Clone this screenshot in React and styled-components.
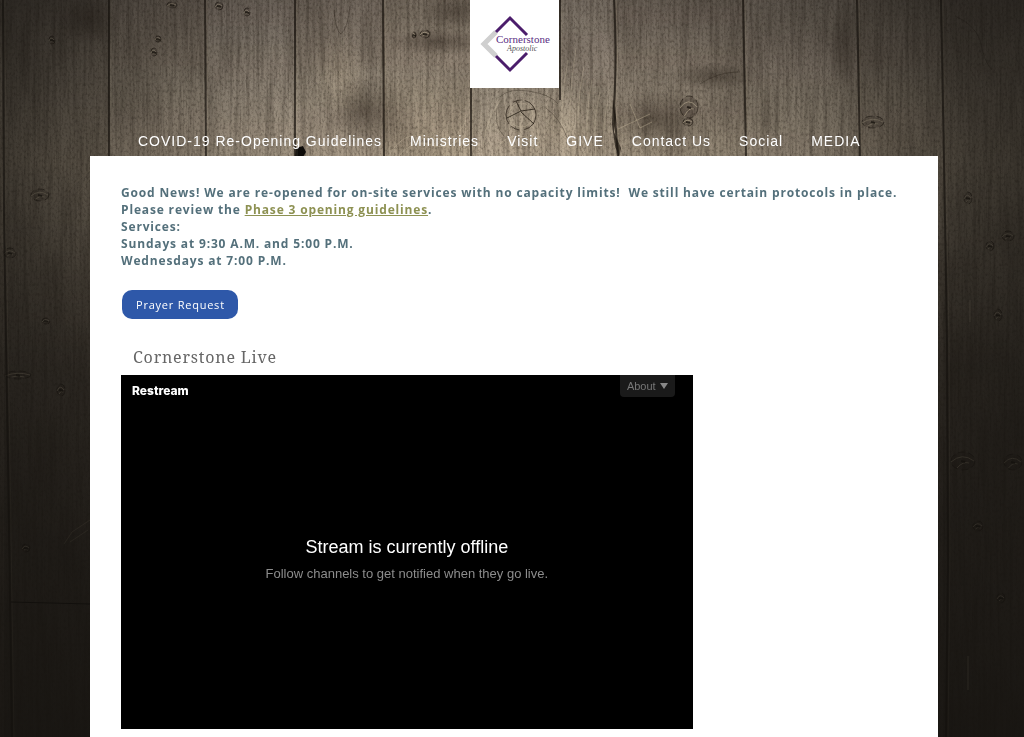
import React from "react";
import styled, { createGlobalStyle } from "styled-components";

const GlobalStyle = createGlobalStyle`
  *, *::before, *::after { box-sizing: border-box; }
  html { background: #24211c; }
  body {
    margin: 0;
    font-family: "Open Sans", "Noto Sans", sans-serif;
    font-size: 12px;
    overflow-x: hidden;
  }
  h1, h2, p, ul { margin: 0; padding: 0; }
`;

const Backdrop = styled.svg`
  position: fixed;
  inset: 0;
  width: 100%;
  height: 100%;
  z-index: -1;
`;

const Page = styled.div`
  height: 100vh;
  overflow: hidden;
  padding: 0 86px 0 90px;
  display: flex;
  flex-direction: column;
`;

const Header = styled.header`
  display: flex;
  flex-direction: column;
  align-items: center;
`;

const LogoLink = styled.a`
  display: block;
  width: 89px;
  height: 88px;
  background: #fff;
`;

const LogoArt = styled.svg`
  display: block;
  width: 100%;
  height: 100%;
`;

const Nav = styled.nav`
  width: 100%;
  padding: 44px 48px 6px;
`;

const NavList = styled.ul`
  display: flex;
  flex-wrap: wrap;
  gap: 0 28px;
  list-style: none;
`;

const NavLink = styled.a`
  display: block;
  color: #fff;
  font-family: "Liberation Sans", Arial, sans-serif;
  font-size: 14px;
  line-height: 18px;
  letter-spacing: 1px;
  text-decoration: none;
  white-space: nowrap;
`;

const Content = styled.main`
  flex: 1 0 auto;
  background: #fff;
  padding: 28px 31px 40px;
`;

const Notice = styled.p`
  color: #54707b;
  font-size: 12px;
  font-weight: 700;
  line-height: 17px;
  letter-spacing: 0.07em;
`;

const NoticeLink = styled.a`
  color: #8d9152;
  text-decoration: underline;
`;

const PrayerButton = styled.button`
  display: block;
  margin: 21px 0 0 1px;
  height: 29px;
  padding: 0 13px 0 14px;
  border: 0;
  border-radius: 10px;
  background: #2e58a9;
  color: #fff;
  font-family: "Open Sans", sans-serif;
  font-size: 11px;
  letter-spacing: 0.07em;
  cursor: pointer;
`;

const SectionTitle = styled.h2`
  margin-top: 26px;
  padding-left: 12px;
  color: #666;
  font-family: "Noto Serif", "Liberation Serif", serif;
  font-size: 16px;
  font-weight: 400;
  line-height: 24px;
  letter-spacing: 0.05em;
`;

const Columns = styled.div`
  margin-top: 6px;
  display: grid;
  grid-template-columns: 8fr 3fr;
`;

const Player = styled.section`
  aspect-ratio: 21 / 13;
  background: #000;
  display: flex;
  flex-direction: column;
`;

const PlayerBar = styled.div`
  display: flex;
  justify-content: space-between;
  align-items: flex-start;
  height: 32px;
  padding: 0 18px 0 11px;
`;

const Brand = styled.span`
  padding-top: 8px;
  color: #fff;
  font-family: Inter, sans-serif;
  font-size: 12px;
  line-height: 16px;
  font-weight: 800;
`;

const AboutButton = styled.button`
  display: flex;
  align-items: center;
  gap: 4px;
  height: 22px;
  padding: 0 7px 1px;
  border: 0;
  border-radius: 0 0 4px 4px;
  background: #1a1a1a;
  color: #777;
  font-family: "Liberation Sans", Arial, sans-serif;
  font-size: 11px;
  cursor: pointer;
`;

const PlayerMessage = styled.div`
  flex: 1;
  display: flex;
  flex-direction: column;
  align-items: center;
  justify-content: center;
  gap: 6px;
  padding-bottom: 18px;
  font-family: "Liberation Sans", Arial, sans-serif;
  text-align: center;
`;

const MessageTitle = styled.p`
  color: #fff;
  font-size: 18px;
  line-height: 24px;
`;

const MessageText = styled.p`
  color: #8c8c8c;
  font-size: 13px;
  line-height: 18px;
`;

const navItems = [
  "COVID-19 Re-Opening Guidelines",
  "Ministries",
  "Visit",
  "GIVE",
  "Contact Us",
  "Social",
  "MEDIA",
];

const planks = [
  { x: 4, w: 105, shade: "#000", o: 0.14 },
  { x: 109, w: 97, shade: "#fff", o: 0.02 },
  { x: 206, w: 89, shade: "#fff", o: 0.05 },
  { x: 295, w: 88, shade: "#fff", o: 0.02 },
  { x: 383, w: 88, shade: "#d8b880", o: 0.04 },
  { x: 471, w: 144, shade: "#fff", o: 0.03 },
  { x: 615, w: 129, shade: "#000", o: 0.06 },
  { x: 744, w: 114, shade: "#fff", o: 0.03 },
  { x: 858, w: 85, shade: "#000", o: 0.04 },
  { x: 943, w: 81, shade: "#000", o: 0.12 },
];

const seams = [
  "M3 0L4 220L8 460L12 737",
  "M109 0V157",
  "M205 0L206 157",
  "M295 0V157",
  "M383 0L384 157",
  "M471 88V157",
  "M560 0V100",
  "M614 0Q617 60 614 105L618 157",
  "M743 0L746 157",
  "M857 0L860 157",
  "M941 0L944 160L947 340L948 560L946 737",
];

const knots = [
  [689, 107, 9, 11],
  [688, 122, 5, 4],
  [873, 122, 11, 6],
  [425, 34, 5, 4],
  [414, 35, 2, 3],
  [172, 5, 5, 3],
  [219, 6, 4, 4],
  [247, 12, 3, 4],
  [52, 40, 3, 4],
  [158, 39, 3, 3],
  [154, 52, 3, 4],
  [40, 195, 9, 6],
  [46, 321, 4, 3],
  [10, 253, 6, 5],
  [18, 375, 13, 4],
  [61, 390, 4, 6],
  [963, 461, 12, 9],
  [1013, 462, 9, 8],
  [978, 526, 5, 5],
  [968, 198, 4, 6],
  [990, 246, 4, 5],
  [998, 315, 4, 6],
  [1008, 236, 6, 5],
  [1001, 598, 4, 5],
  [26, 548, 4, 4],
];

function Wood() {
  return (
    <Backdrop viewBox="0 0 1024 737" preserveAspectRatio="xMidYMin slice" aria-hidden="true">
      <defs>
        <linearGradient id="base" x1="0" x2="0" y1="0" y2="1">
          <stop offset="0" stopColor="#80756a" />
          <stop offset="0.12" stopColor="#a19483" />
          <stop offset="0.22" stopColor="#b8a993" />
          <stop offset="0.5" stopColor="#6c6256" />
          <stop offset="0.8" stopColor="#544b42" />
          <stop offset="1" stopColor="#3c362f" />
        </linearGradient>
        <radialGradient
          id="vignette"
          gradientUnits="userSpaceOnUse"
          cx="0"
          cy="0"
          r="1"
          gradientTransform="translate(490 160) scale(600 560)"
        >
          <stop offset="0" stopColor="#12100d" stopOpacity="0" />
          <stop offset="0.35" stopColor="#12100d" stopOpacity="0.12" />
          <stop offset="0.6" stopColor="#12100d" stopOpacity="0.38" />
          <stop offset="0.8" stopColor="#12100d" stopOpacity="0.66" />
          <stop offset="1" stopColor="#12100d" stopOpacity="0.78" />
        </radialGradient>
        <radialGradient id="stain">
          <stop offset="0" stopColor="#2a2119" stopOpacity="0.42" />
          <stop offset="1" stopColor="#2a2119" stopOpacity="0" />
        </radialGradient>
        <radialGradient id="glow">
          <stop offset="0" stopColor="#cbbaa0" stopOpacity="0.5" />
          <stop offset="1" stopColor="#cbbaa0" stopOpacity="0" />
        </radialGradient>
        <filter id="grain" x="0" y="0" width="100%" height="100%" colorInterpolationFilters="sRGB">
          <feTurbulence type="fractalNoise" baseFrequency="0.3 0.012" numOctaves="4" seed="7" />
          <feColorMatrix values="0 0 0 0 0.14  0 0 0 0 0.11  0 0 0 0 0.08  1.6 0 0 0 -0.6" />
        </filter>
        <filter id="speck" x="0" y="0" width="100%" height="100%" colorInterpolationFilters="sRGB">
          <feTurbulence type="fractalNoise" baseFrequency="0.5 0.3" numOctaves="3" seed="3" />
          <feColorMatrix values="0 0 0 0 0.14  0 0 0 0 0.11  0 0 0 0 0.08  1.6 0 0 0 -0.7" />
        </filter>
        <filter id="mottle" x="0" y="0" width="100%" height="100%" colorInterpolationFilters="sRGB">
          <feTurbulence type="fractalNoise" baseFrequency="0.018 0.012" numOctaves="4" seed="12" />
          <feColorMatrix values="0 0 0 0 0.14  0 0 0 0 0.11  0 0 0 0 0.08  2 0 0 0 -0.9" />
        </filter>
      </defs>
      <rect width="1024" height="737" fill="url(#base)" />
      {planks.map((p) => (
        <rect key={p.x} x={p.x} width={p.w} height="737" fill={p.shade} opacity={p.o} />
      ))}
      <ellipse cx="366" cy="110" rx="44" ry="36" fill="url(#stain)" />
      <ellipse cx="440" cy="42" rx="52" ry="14" fill="url(#stain)" />
      <ellipse cx="455" cy="12" rx="36" ry="20" fill="url(#stain)" />
      <ellipse cx="655" cy="118" rx="56" ry="28" fill="url(#stain)" />
      <ellipse cx="715" cy="76" rx="46" ry="14" fill="url(#stain)" />
      <ellipse cx="88" cy="20" rx="30" ry="26" fill="url(#stain)" />
      <ellipse cx="845" cy="40" rx="14" ry="50" fill="url(#stain)" />
      <ellipse cx="560" cy="130" rx="80" ry="46" fill="url(#glow)" />
      <ellipse cx="440" cy="140" rx="50" ry="50" fill="url(#glow)" />
      <ellipse cx="340" cy="76" rx="30" ry="44" fill="url(#glow)" />
      <rect width="1024" height="737" filter="url(#mottle)" opacity="0.2" />
      <rect width="1024" height="737" filter="url(#grain)" opacity="0.42" />
      <rect width="1024" height="737" filter="url(#speck)" opacity="0.5" />
      <g fill="none" stroke="#d8caae" strokeOpacity="0.28">
        <path d="M564 157Q558 110 568 60M572 157Q566 112 576 48M580 157Q574 116 584 66M588 157Q584 120 592 80M596 157Q592 124 600 92M604 157Q602 130 607 104" />
        <path d="M388 157Q404 128 430 137T466 120M398 157Q412 138 432 145T468 130M484 157Q480 130 500 100M494 157Q498 138 516 136T545 157" />
      </g>
      <g fill="none" stroke="#2b2319" strokeOpacity="0.35">
        <path d="M334 10Q336 32 341 34Q348 28 350 6M700 84Q718 72 738 72M955 16Q974 24 980 40Q984 62 992 70" />
        <path d="M500 97Q508 88 528 91Q550 94 558 104M497 108Q494 126 504 136M546 108Q560 118 568 140" />
      </g>
      <path d="M618 129L650 114M630 104L640 128L652 122" fill="none" stroke="#cbbd9f" strokeOpacity="0.45" />
      <g fill="none">
        <circle cx="521" cy="115" r="15" stroke="#2a2118" strokeOpacity="0.7" strokeDasharray="20 5 9 3" />
        <circle cx="521" cy="115" r="12" stroke="#cbbda2" strokeOpacity="0.35" />
        <path d="M516 101L521 111L535 109M521 111L507 118M521 112L534 124" stroke="#1c150e" strokeOpacity="0.75" />
      </g>
      {knots.map(([x, y, rx, ry]) => (
        <g key={`${x}-${y}`} fill="none">
          <ellipse cx={x} cy={y} rx={rx} ry={ry} fill="#1f1912" fillOpacity="0.22" stroke="#1d160f" strokeOpacity="0.6" strokeDasharray="7 4" />
          <path
            d={`M${x - rx} ${y + 1}Q${x - 1} ${y - ry} ${x + rx - 1} ${y}M${x - rx / 2} ${y + ry - 2}Q${x} ${y} ${x + rx / 2} ${y + 2}`}
            stroke="#d4c5a8"
            strokeOpacity="0.55"
          />
          <path d={`M${x - 2} ${y}L${x + 2} ${y + 1}`} stroke="#120e09" strokeWidth="2" strokeOpacity="0.7" />
        </g>
      ))}
      <path d="M613 100L616 118L614 132L621 148L619 157L615 146L612 124Z" fill="#1a140e" opacity="0.7" />
      <path d="M295 157L296 148L303 146L306 152L303 157Z" fill="#0c0a08" />
      <g fill="none">
        {seams.map((d) => (
          <g key={d}>
            <path d={d} stroke="#1a140e" strokeWidth="2" strokeOpacity="0.7" />
            <path d={d} transform="translate(2 0)" stroke="#c4b598" strokeOpacity="0.2" />
          </g>
        ))}
        <path d="M11 602L90 604" stroke="#0b0907" strokeOpacity="0.9" />
        <path d="M126 140V156M970 300V322M968 656V690" stroke="#b8ab92" strokeOpacity="0.6" />
        <path d="M90 170L74 184L64 196M90 178L78 194M90 520L72 532L64 544M88 530L70 542" stroke="#9a8c76" strokeOpacity="0.5" />
      </g>
      <rect width="1024" height="737" fill="url(#vignette)" />
    </Backdrop>
  );
}

function Logo() {
  return (
    <LogoArt viewBox="0 0 89 88" role="img" aria-label="Cornerstone Apostolic">
      <path d="M26 32L14 44L26 56" fill="none" stroke="#cfcfcf" strokeWidth="5" />
      <path d="M26 32L40 18L57 35M26 56L40 70L57 53" fill="none" stroke="#4b1d6b" strokeWidth="3" />
      <text x="26" y="43" fill="#5a2d82" fontFamily="'Liberation Serif', serif" fontSize="11">
        Cornerstone
      </text>
      <text x="37" y="51" fill="#555" fontFamily="'Liberation Serif', serif" fontStyle="italic" fontSize="8">
        Apostolic
      </text>
    </LogoArt>
  );
}

export default function App() {
  return (
    <>
      <GlobalStyle />
      <Wood />
      <Page>
        <Header>
          <LogoLink href="#home">
            <Logo />
          </LogoLink>
          <Nav>
            <NavList>
              {navItems.map((item) => (
                <li key={item}>
                  <NavLink href="#">{item}</NavLink>
                </li>
              ))}
            </NavList>
          </Nav>
        </Header>
        <Content>
          <Notice>
            Good News! We are re-opened for on-site services with no capacity limits!&nbsp; We still
            have certain protocols in place.
            <br />
            Please review the <NoticeLink href="#guidelines">Phase 3 opening guidelines</NoticeLink>.
            <br />
            Services:
            <br />
            Sundays at 9:30 A.M. and 5:00 P.M.
            <br />
            Wednesdays at 7:00 P.M.
          </Notice>
          <PrayerButton type="button">Prayer Request</PrayerButton>
          <SectionTitle>Cornerstone Live</SectionTitle>
          <Columns>
            <Player aria-label="Live stream">
              <PlayerBar>
                <Brand>Restream</Brand>
                <AboutButton type="button">
                  About
                  <svg width="8" height="6" viewBox="0 0 8 6" aria-hidden="true">
                    <path d="M0 0H8L4 6Z" fill="#888" />
                  </svg>
                </AboutButton>
              </PlayerBar>
              <PlayerMessage>
                <MessageTitle>Stream is currently offline</MessageTitle>
                <MessageText>Follow channels to get notified when they go live.</MessageText>
              </PlayerMessage>
            </Player>
          </Columns>
        </Content>
      </Page>
    </>
  );
}
